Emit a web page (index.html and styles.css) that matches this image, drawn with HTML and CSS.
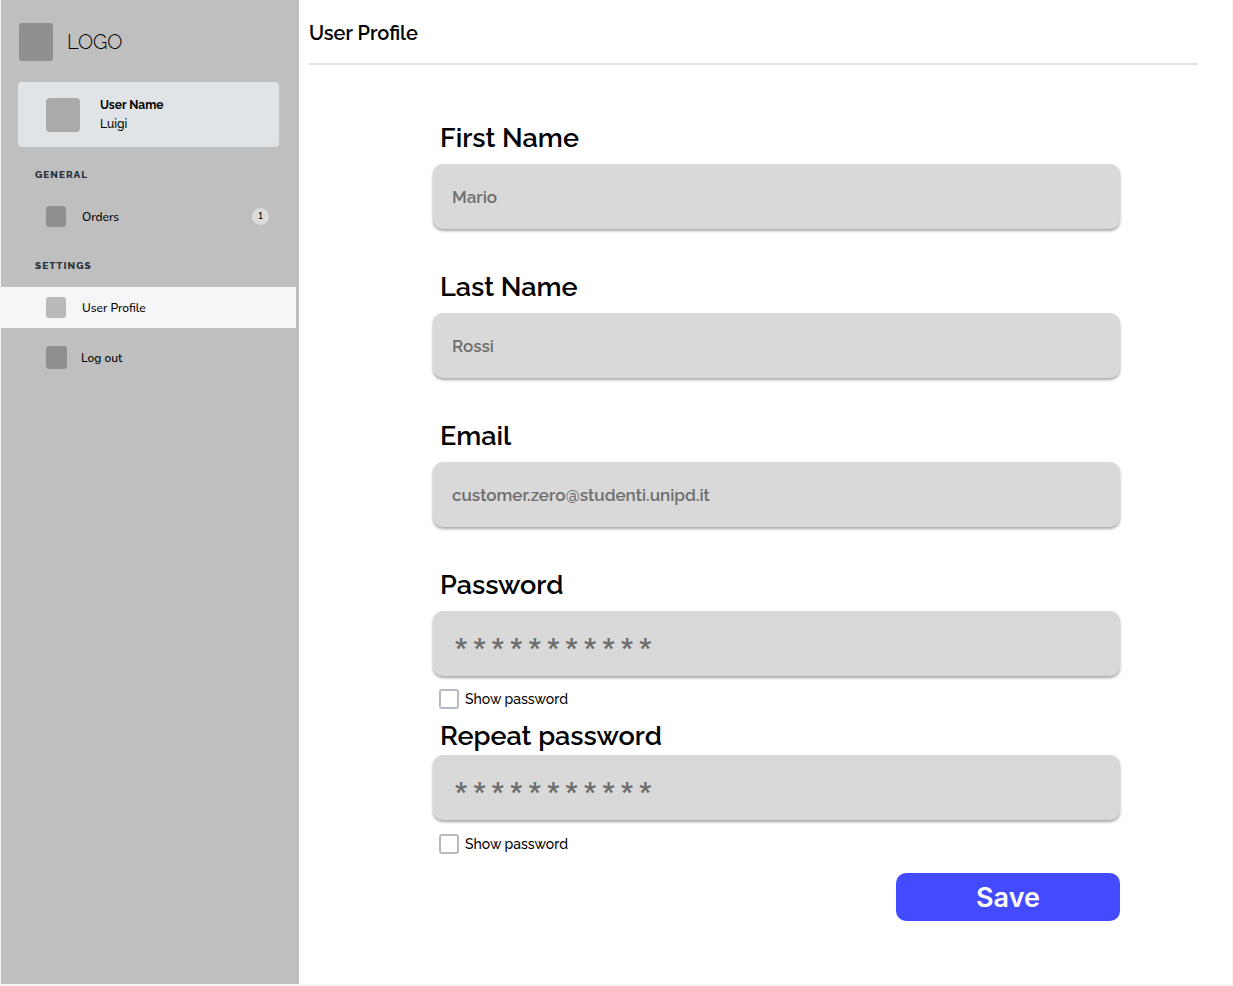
FILE: index.html
```html
<!DOCTYPE html>
<html lang="en">
<head>
<meta charset="utf-8">
<meta name="viewport" content="width=device-width, initial-scale=1">
<title>User Profile</title>
<link rel="stylesheet" href="styles.css">
</head>
<body>
<div class="app">
  <aside class="sidebar">
    <div class="brand">
      <span class="brand-mark"></span>
      <span class="brand-name">LOGO</span>
    </div>
    <div class="user-card">
      <span class="avatar"></span>
      <div class="user-text">
        <strong class="user-title">User Name</strong>
        <span class="user-value">Luigi</span>
      </div>
    </div>
    <nav class="nav">
      <h2 class="nav-heading">GENERAL</h2>
      <a class="nav-item" href="#orders"><span class="nav-icon"></span>Orders<span class="badge">1</span></a>
      <h2 class="nav-heading">SETTINGS</h2>
      <a class="nav-item nav-item-active" href="#profile" aria-current="page"><span class="nav-icon"></span>User Profile</a>
      <a class="nav-item nav-item-logout" href="#logout"><span class="nav-icon"></span>Log out</a>
    </nav>
  </aside>
  <main class="main">
    <header class="page-header">
      <h1 class="page-title">User Profile</h1>
    </header>
    <form class="form">
      <div class="field">
        <label class="field-label" for="first">First Name</label>
        <input class="field-input" id="first" type="text" placeholder="Mario">
      </div>
      <div class="field">
        <label class="field-label" for="last">Last Name</label>
        <input class="field-input" id="last" type="text" placeholder="Rossi">
      </div>
      <div class="field">
        <label class="field-label" for="email">Email</label>
        <input class="field-input" id="email" type="email" placeholder="customer.zero@studenti.unipd.it">
      </div>
      <div class="field">
        <label class="field-label" for="password">Password</label>
        <input class="field-input field-input-secret" id="password" type="password" placeholder="* * * * * * * * * * *">
        <label class="check"><input class="check-box" type="checkbox">Show password</label>
      </div>
      <div class="field field-repeat">
        <label class="field-label" for="repeat">Repeat password</label>
        <input class="field-input field-input-secret" id="repeat" type="password" placeholder="* * * * * * * * * * *">
        <label class="check"><input class="check-box" type="checkbox">Show password</label>
      </div>
      <button class="save" type="submit">Save</button>
    </form>
  </main>
</div>
</body>
</html>
```
FILE: styles.css
```css
* {
  box-sizing: border-box;
}

body {
  margin: 0;
  background: #f5f5f5;
  color: #000;
  font-family: Raleway, Lato, sans-serif;
}

.app {
  display: flex;
  min-height: 100vh;
  padding: 0 1px 2px;
}

.sidebar {
  flex: 0 0 298px;
  padding-top: 23px;
  background: #bfbfbf;
}

.brand {
  display: flex;
  align-items: center;
  gap: 14px;
  padding-left: 18px;
}

.brand-mark {
  width: 34px;
  height: 38px;
  border-radius: 3px;
  background: #8f8f8f;
}

.brand-name {
  font-size: 20px;
  font-weight: 300;
  line-height: 24px;
}

.user-card {
  display: flex;
  align-items: center;
  gap: 20px;
  height: 65px;
  margin: 21px 20px 0 17px;
  padding-left: 28px;
  border-radius: 4px;
  background: #e0e4e7;
}

.avatar {
  width: 34px;
  height: 34px;
  border-radius: 4px;
  background: #a9aaab;
}

.user-text {
  display: flex;
  flex-direction: column;
  font-size: 12px;
  font-weight: 500;
  line-height: 19px;
}

.user-title {
  font-weight: 700;
}

.nav {
  display: flex;
  flex-direction: column;
}

.nav-heading {
  margin: 20px 0 13px 34px;
  color: #28323e;
  font-size: 10px;
  font-weight: 800;
  line-height: 16px;
  letter-spacing: 1px;
}

.nav-item + .nav-heading {
  margin-top: 21px;
}

.nav-item {
  display: flex;
  align-items: center;
  gap: 16px;
  height: 41px;
  margin-right: 3px;
  padding: 0 27px 0 45px;
  color: #000;
  font-family: Nunito, "Open Sans", sans-serif;
  font-size: 12px;
  font-weight: 500;
  text-decoration: none;
}

.nav-icon {
  width: 20px;
  height: 21px;
  border-radius: 3px;
  background: #8f8f8f;
}

.nav-item-active {
  background: #f5f6f8;
}

.nav-item-active .nav-icon {
  background: #b9babc;
}

.nav-item-logout {
  gap: 14px;
  margin-top: 9px;
}

.nav-item-logout .nav-icon {
  width: 21px;
  height: 23px;
}

.badge {
  width: 17px;
  height: 17px;
  margin-left: auto;
  border-radius: 50%;
  background: #dcdcdc;
  font-size: 9px;
  font-weight: 600;
  line-height: 17px;
  text-align: center;
}

.main {
  flex: 1;
  background: #fff;
}

.page-header {
  margin: 0 34px 0 10px;
  padding: 21px 0 18px;
  border-bottom: 2px solid #e0e3e7;
}

.page-title {
  margin: 0;
  font-size: 20px;
  font-weight: 600;
  line-height: 24px;
}

.form {
  display: flex;
  flex-direction: column;
  gap: 42px;
  margin: 57px 112px 0 134px;
}

.field {
  display: flex;
  flex-direction: column;
  gap: 10px;
}

.field-label {
  padding-left: 7px;
  font-size: 27px;
  font-weight: 600;
  line-height: 32px;
}

.field-input {
  width: 100%;
  height: 65px;
  padding: 0 19px;
  border: 0;
  border-radius: 10px;
  background: #d9d9d9;
  box-shadow: 0 2px 3px rgba(0, 0, 0, 0.35);
  color: #333;
  font-family: inherit;
  font-size: 17px;
  font-weight: 600;
}

.field-input::placeholder {
  color: #6e6e6e;
  opacity: 1;
}

.field-input-secret {
  padding-top: 8px;
  padding-left: 22px;
  font-family: Roboto, sans-serif;
  font-size: 26px;
  font-weight: 800;
}

.field-repeat {
  gap: 3px;
  margin-top: -31px;
}

.check {
  display: flex;
  align-items: center;
  gap: 6px;
  margin-top: 3px;
  padding-left: 6px;
  font-size: 14px;
  font-weight: 500;
  line-height: 20px;
}

.field-repeat .check {
  margin-top: 11px;
}

.check-box {
  width: 20px;
  height: 20px;
  margin: 0;
  border: 2px solid #b4bbc4;
  border-radius: 3px;
  background: #fff;
  appearance: none;
}

.check-box:checked {
  background: #444aff;
}

.save {
  align-self: flex-end;
  width: 224px;
  height: 48px;
  margin-top: -23px;
  border: 0;
  border-radius: 10px;
  background: #444aff;
  color: #fff;
  font-family: Inter, sans-serif;
  font-size: 27px;
  font-weight: 600;
}
```
